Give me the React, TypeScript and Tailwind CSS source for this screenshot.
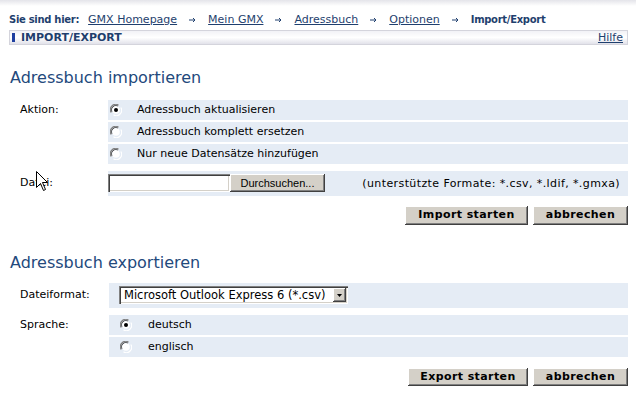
import React from 'react';

const raised =
  'bg-[#d4d0c8] shadow-[inset_-1px_-1px_0_#404040,inset_1px_1px_0_#ffffff,inset_-2px_-2px_0_#808080]';
const sunken =
  'bg-white shadow-[inset_1px_1px_0_#808080,inset_2px_2px_0_#404040,inset_-1px_-1px_0_#ffffff,inset_-2px_-2px_0_#d4d0c8]';

const Radio: React.FC<{ checked?: boolean }> = ({ checked }) => (
  <svg width="12" height="12" viewBox="0 0 12 12" className="shrink-0">
    <path d="M1.2 8.5 A5.3 5.3 0 0 1 8.5 1.2" stroke="#808080" strokeWidth="1.2" fill="none" />
    <path d="M2.2 8 A4.2 4.2 0 0 1 8 2.2" stroke="#404040" strokeWidth="1" fill="none" />
    <path d="M3.5 10.8 A5.3 5.3 0 0 0 10.8 3.5" stroke="#ffffff" strokeWidth="1.2" fill="none" />
    <circle cx="6" cy="6" r="3.8" fill="#ffffff" />
    {checked && <circle cx="6" cy="6" r="2" fill="#000" />}
  </svg>
);

const Arrow = () => (
  <svg width="7" height="6" viewBox="0 0 7 6" className="mx-[12px] shrink-0">
    <path d="M0 3h6M4 1l2 2-2 2" stroke="#1f3f6e" strokeWidth="1" fill="none" />
  </svg>
);

const crumbs = ['GMX Homepage', 'Mein GMX', 'Adressbuch', 'Optionen'];

const RadioRow: React.FC<{ label: string; checked?: boolean; inset: string; gap: string }> = ({
  label,
  checked,
  inset,
  gap,
}) => (
  <div className="h-[20px] bg-[#e5ecf5] flex items-center">
    <div className={inset}>
      <Radio checked={checked} />
    </div>
    <span className={gap}>{label}</span>
  </div>
);

const App: React.FC = () => {
  return (
    <div className="relative w-[636px] h-[395px] overflow-hidden bg-white text-black font-['DejaVu_Sans','Verdana',sans-serif] text-[11px]">
      {/* top shade */}
      <div className="absolute left-0 top-0 w-full h-[6px] bg-gradient-to-b from-[#e4e4ea] to-white" />

      {/* Breadcrumb */}
      <div className="relative flex items-center pl-[9px] pt-[9px] h-[30px] leading-[13px] text-[#1f3f6e]">
        <span className="font-bold text-[10px] tracking-[-0.3px] mr-[9px]">Sie sind hier:</span>
        {crumbs.map((c) => (
          <React.Fragment key={c}>
            <span className="underline">{c}</span>
            <Arrow />
          </React.Fragment>
        ))}
        <span className="font-bold text-[10px] tracking-[-0.3px]">Import/Export</span>
      </div>

      {/* Title bar */}
      <div className="ml-[9px] w-[619px] h-[15px] border border-[#d4d4dc] bg-gradient-to-b from-[#f2f2f6] via-white to-[#e2e2ea] flex items-center justify-between">
        <div className="flex items-center">
          <div className="ml-[2px] w-[3px] h-[9px] bg-[#1f3fa0]" />
          <span className="ml-[6px] text-[11px] leading-[12px] font-bold text-[#1f3f6e]">IMPORT/EXPORT</span>
        </div>
        <span className="mr-[4px] underline text-[#1f3f6e] leading-[12px]">Hilfe</span>
      </div>

      {/* Import */}
      <h2 className="mt-[24px] pl-[10px] text-[16px] leading-[18px] text-[#23497c]">Adressbuch importieren</h2>

      <div className="mt-[13px] flex">
        <div className="w-[108px] pl-[20px] h-[20px] flex items-center">Aktion:</div>
        <div className="w-[520px] flex flex-col gap-[2px]">
          <RadioRow label="Adressbuch aktualisieren" checked inset="ml-[2px]" gap="ml-[15px]" />
          <RadioRow label="Adressbuch komplett ersetzen" inset="ml-[2px]" gap="ml-[15px]" />
          <RadioRow label="Nur neue Datensätze hinzufügen" inset="ml-[2px]" gap="ml-[15px]" />
        </div>
      </div>

      <div className="mt-[7px] flex items-center h-[25px]">
        <div className="w-[108px] pl-[20px]">Datei:</div>
        <div className="w-[520px] h-[25px] bg-[#e5ecf5] flex items-start pt-[3px]">
          <div className={`w-[122px] h-[18px] ${sunken}`} />
          <div
            className={`w-[95px] h-[18px] flex items-center justify-center font-['Liberation_Sans',sans-serif] text-[11px] ${raised}`}
          >
            Durchsuchen...
          </div>
          <span className="ml-auto mr-[8px] mt-[2px] tracking-[0.4px]">
            (unterstützte Formate: *.csv, *.ldif, *.gmxa)
          </span>
        </div>
      </div>

      <div className="mt-[10px] w-[628px] flex justify-end gap-[5px]">
        <div className={`w-[123px] h-[19px] flex items-center justify-center font-bold tracking-[0.4px] ${raised}`}>
          Import starten
        </div>
        <div className={`w-[95px] h-[19px] flex items-center justify-center font-bold tracking-[0.4px] ${raised}`}>
          abbrechen
        </div>
      </div>

      {/* Export */}
      <h2 className="mt-[29px] pl-[10px] text-[16px] leading-[18px] text-[#23497c]">Adressbuch exportieren</h2>

      <div className="mt-[11px] flex items-center h-[25px]">
        <div className="w-[109px] pl-[20px]">Dateiformat:</div>
        <div className="w-[519px] h-[25px] bg-[#e5ecf5] flex items-start pt-[3px]">
          <div className={`ml-[10px] w-[229px] h-[18px] flex items-center overflow-hidden ${sunken}`}>
            <span className="ml-[5px] text-[11.5px] leading-[14px] whitespace-nowrap">
              Microsoft Outlook Express 6 (*.csv)
            </span>
            <div className={`ml-auto mr-[2px] shrink-0 w-[13px] h-[14px] flex items-center justify-center ${raised}`}>
              <svg width="5" height="3" viewBox="0 0 5 3">
                <path d="M0 0h5L2.5 3z" fill="#000" />
              </svg>
            </div>
          </div>
        </div>
      </div>

      <div className="mt-[7px] flex">
        <div className="w-[109px] pl-[20px] h-[20px] flex items-center">Sprache:</div>
        <div className="w-[519px] flex flex-col gap-[2px]">
          <RadioRow label="deutsch" checked inset="ml-[11px]" gap="ml-[16px]" />
          <RadioRow label="englisch" inset="ml-[11px]" gap="ml-[16px]" />
        </div>
      </div>

      <div className="mt-[11px] w-[628px] flex justify-end gap-[5px]">
        <div className={`w-[120px] h-[18px] flex items-center justify-center font-bold tracking-[0.4px] ${raised}`}>
          Export starten
        </div>
        <div className={`w-[95px] h-[18px] flex items-center justify-center font-bold tracking-[0.4px] ${raised}`}>
          abbrechen
        </div>
      </div>

      {/* mouse pointer */}
      <svg className="absolute left-[36px] top-[171px]" width="13" height="21" viewBox="0 0 13 21">
        <path
          d="M0.5 0.5 L0.5 16.5 L4.5 12.5 L7.5 19.5 L9.5 18.5 L6.5 11.5 L11.5 11.5 Z"
          fill="#ffffff"
          stroke="#000"
          strokeWidth="1"
        />
      </svg>
    </div>
  );
};

export default App;
